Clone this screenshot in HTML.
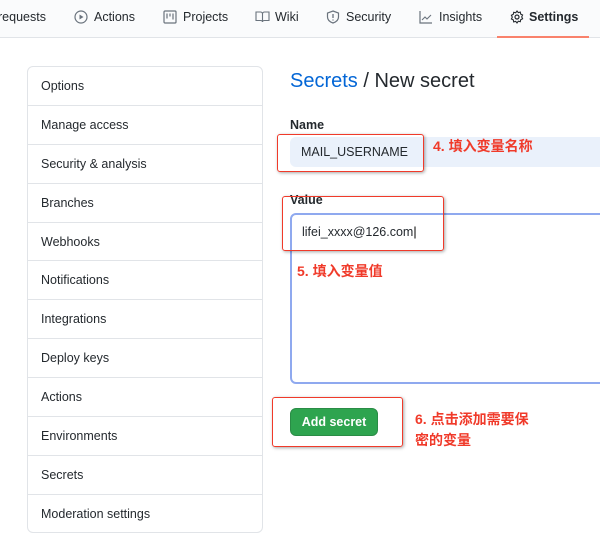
<!DOCTYPE html>
<html><head><meta charset="utf-8"><style>
*{box-sizing:border-box;margin:0;padding:0}
body{width:600px;height:544px;overflow:hidden;background:#fff;font-family:"Liberation Sans","Noto Sans CJK SC",sans-serif;color:#24292e;position:relative}
.nav{position:absolute;left:0;top:0;width:600px;height:38px;background:#fafbfc;border-bottom:1px solid #e1e4e8}
.nav span{position:absolute;top:10px;font-size:12.5px;color:#24292e;white-space:nowrap}
.nav svg{position:absolute;top:10px}
.ul{position:absolute;left:497px;top:36px;width:92px;height:2px;background:#f9826c}
.side{position:absolute;left:27px;top:66px;width:236px;height:467px;border:1px solid #e1e4e8;border-radius:6px}
.side div{height:38.9px;line-height:38px;padding-left:13px;font-size:12.5px;border-bottom:1px solid #e1e4e8;color:#24292e}
.side div:last-child{border-bottom:none}
.abs{position:absolute}
.red{position:absolute;border:1.5px solid #f03a2a;border-radius:3px;box-shadow:1px 1px 3px rgba(0,0,0,.35)}
.ann{position:absolute;color:#f03a2a;font-weight:bold;font-size:14px;line-height:21px}
</style></head><body>
<div class="nav">
<span style="left:-2px">requests</span>
<svg style="left:74px" width="14" height="14" viewBox="0 0 14 14"><circle cx="7" cy="7" r="6" fill="none" stroke="#6a737d" stroke-width="1.2"/><path d="M5.5 4.5v5l4-2.5z" fill="#6a737d"/></svg>
<span style="left:94px">Actions</span>
<svg style="left:163px" width="14" height="14" viewBox="0 0 14 14"><rect x="1" y="1" width="12" height="12" rx="1" fill="none" stroke="#6a737d" stroke-width="1.2"/><path d="M4 3.5v5M7 3.5v3M10 3.5v6" stroke="#6a737d" stroke-width="1.2"/></svg>
<span style="left:183px">Projects</span>
<svg style="left:255px" width="15" height="14" viewBox="0 0 15 14"><path d="M1 2h4.5c1 0 2 .8 2 2v8c0-1-1-1.5-2-1.5H1zM14 2H9.5c-1 0-2 .8-2 2v8c0-1 1-1.5 2-1.5H14z" fill="none" stroke="#6a737d" stroke-width="1.1"/></svg>
<span style="left:275px">Wiki</span>
<svg style="left:326px" width="14" height="14" viewBox="0 0 14 14"><path d="M7 1l5.5 2v4c0 3-2.5 5-5.5 6-3-1-5.5-3-5.5-6V3z" fill="none" stroke="#6a737d" stroke-width="1.2"/><path d="M7 4v4M7 9.5v1" stroke="#6a737d" stroke-width="1.3"/></svg>
<span style="left:346px">Security</span>
<svg style="left:419px" width="14" height="14" viewBox="0 0 14 14"><path d="M1 1v12h12" fill="none" stroke="#6a737d" stroke-width="1.2"/><path d="M3 10l3-3 2 2 4-4" fill="none" stroke="#6a737d" stroke-width="1.1"/></svg>
<span style="left:439px">Insights</span>
<svg style="left:510px" width="14" height="14" viewBox="0 0 14 14"><circle cx="7" cy="7" r="2" fill="none" stroke="#24292e" stroke-width="1.2"/><path d="M7 1l1.3 1.6 2-.5.4 2 1.9.9-.9 1.9.9 1.9-1.9.9-.4 2-2-.5L7 13l-1.3-1.6-2 .5-.4-2L1.4 9l.9-1.9L1.4 5.2l1.9-.9.4-2 2 .5z" fill="none" stroke="#24292e" stroke-width="1.1"/></svg>
<span style="left:529px;font-weight:bold">Settings</span>
<div class="ul"></div>
</div>
<div class="side">
<div>Options</div><div>Manage access</div><div>Security &amp; analysis</div><div>Branches</div><div>Webhooks</div><div>Notifications</div><div>Integrations</div><div>Deploy keys</div><div>Actions</div><div>Environments</div><div>Secrets</div><div>Moderation settings</div>
</div>
<div class="abs" style="left:290px;top:70px;font-size:20px;white-space:nowrap"><span style="color:#0366d6">Secrets</span> / New secret</div>
<div class="abs" style="left:290px;top:118px;font-size:12.5px;font-weight:bold">Name</div>
<div class="abs" style="left:290px;top:137px;width:320px;height:30px;background:#eaf1fb;border-radius:6px;font-size:12.5px;line-height:30px;padding-left:11px">MAIL_USERNAME</div>
<div class="abs" style="left:290px;top:193px;font-size:12.5px;font-weight:bold">Value</div>
<div class="abs" style="left:290px;top:213px;width:320px;height:171px;border:2px solid #8fa9ef;border-radius:6px;font-size:12.5px;padding:10px 0 0 10px">lifei_xxxx@126.com<span style="color:#000">|</span></div>
<div class="abs" style="left:290px;top:408px;width:88px;height:28px;background:#2ea44f;border:1px solid #2a8c46;border-radius:6px;color:#fff;font-weight:bold;font-size:12.5px;line-height:26px;text-align:center">Add secret</div>
<div class="red" style="left:277px;top:134px;width:147px;height:38px"></div>
<div class="red" style="left:282px;top:196px;width:162px;height:55px"></div>
<div class="red" style="left:272px;top:397px;width:131px;height:50px"></div>
<div class="ann" style="left:433px;top:136px">4. 填入变量名称</div>
<div class="ann" style="left:297px;top:261px">5. 填入变量值</div>
<div class="ann" style="left:415px;top:409px;width:130px">6. 点击添加需要保<br>密的变量</div>
</body></html>
